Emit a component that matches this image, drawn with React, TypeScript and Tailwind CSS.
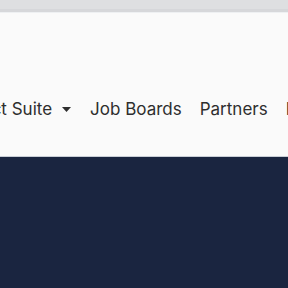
export default function App() {
  return (
    <div className="flex h-[288px] w-[288px] flex-col overflow-hidden bg-[#1a2540] font-['Inter',sans-serif]">
      <div className="h-[9px] bg-[#dedfe1]" />
      <div className="h-[3px] bg-[#d6d7da]" />
      <div className="h-[1px] bg-[#eef0f2]" />
      <header className="flex h-[144px] items-start overflow-hidden border-b border-[#c9ced6] bg-[#fafafa] pt-[84px]">
        <nav className="ml-[-56px] flex shrink-0 items-center gap-[18px] whitespace-nowrap text-[17px] leading-[24px] text-[#2e2e2e]">
          <span className="flex items-center gap-[10px]">
            Product Suite
            <svg width="9" height="5" viewBox="0 0 9 5">
              <path d="M0 0h9L4.5 5z" fill="#2e2e2e" />
            </svg>
          </span>
          <span className="ml-[1px]">Job Boards</span>
          <span>Partners</span>
          <span>Resources</span>
        </nav>
      </header>
      <main className="flex-1" />
    </div>
  );
}
